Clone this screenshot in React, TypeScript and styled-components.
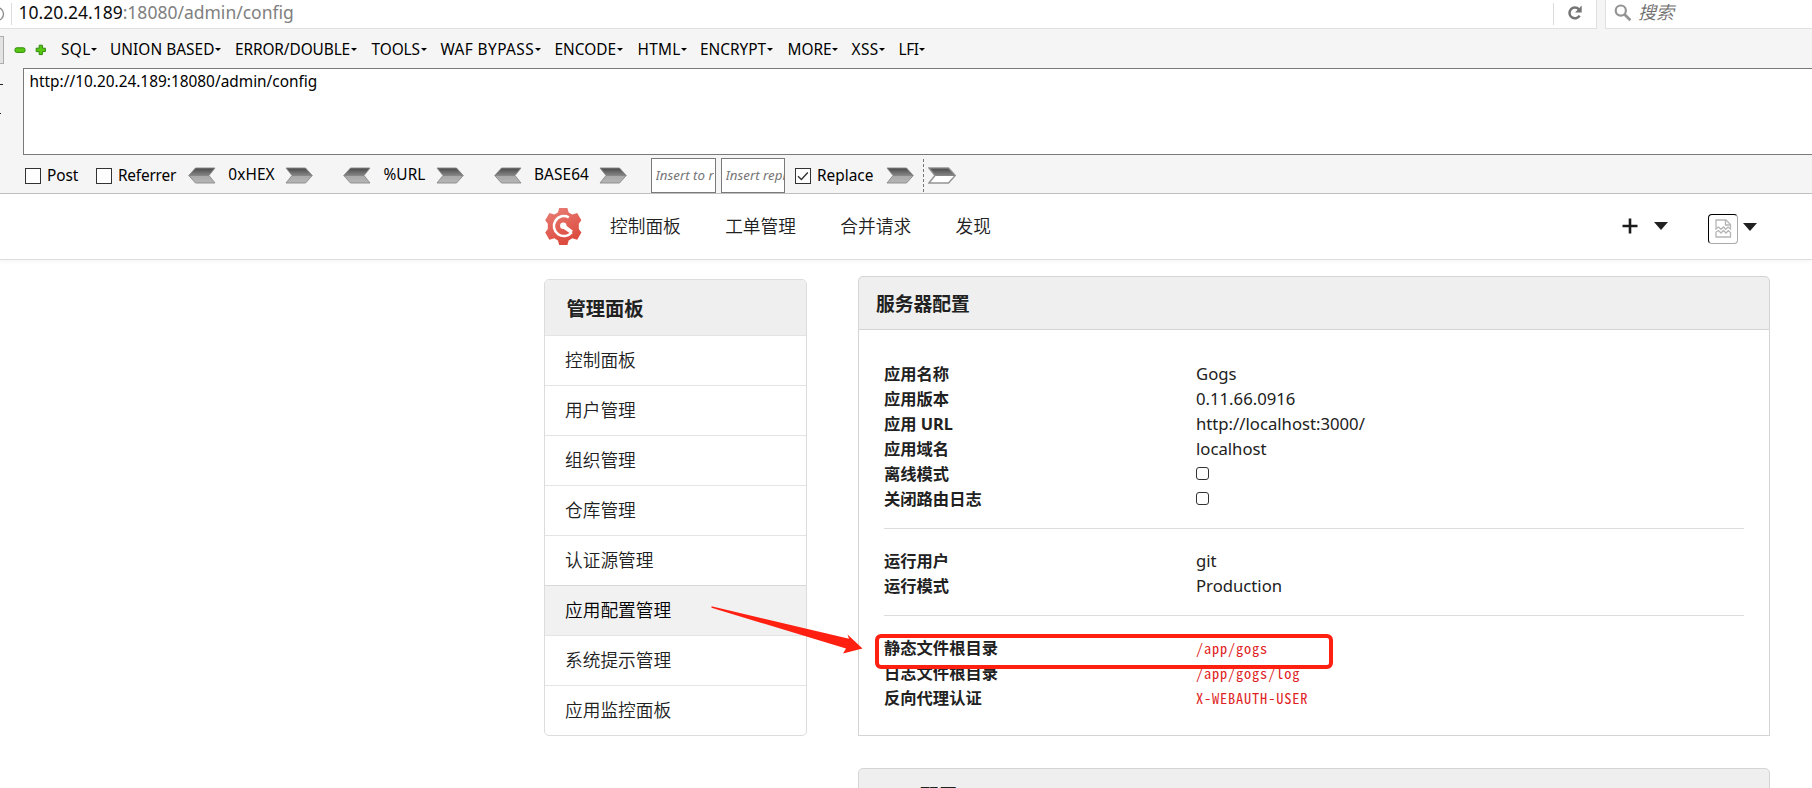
import React from 'react';
import styled, { createGlobalStyle, css } from 'styled-components';

const GlobalStyle = createGlobalStyle`
  * { box-sizing: border-box; }
  body {
    margin: 0;
    background: #fff;
    overflow: hidden;
    font-family: "Noto Sans", "Noto Sans CJK SC", sans-serif;
    color: #212121;
  }
`;

const Page = styled.div`
  position: relative;
  width: 1812px;
  height: 788px;
  overflow: hidden;
`;

/* ---------- browser chrome ---------- */

const AddressRow = styled.div`
  display: flex;
  gap: 8px;
  height: 29px;
  background: #f5f5f5;
`;

const AddressBox = styled.div`
  display: flex;
  align-items: center;
  width: 1597px;
  padding-bottom: 3px;
  background: #fff;
  border-right: 1px solid #e0e0e0;
  border-bottom: 1px solid #e0e0e0;
`;

const SearchBox = styled(AddressBox)`
  flex: 1;
  width: auto;
  padding-left: 8px;
  border-right: 0;
  border-left: 1px solid #e0e0e0;
`;

const Separator = styled.div`
  width: 1px;
  height: 22px;
  margin-top: 3px;
  background: #dcdcdc;
`;

const AddressText = styled.div`
  flex: 1;
  margin-left: 6.5px;
  padding-bottom: 2px;
  font-size: 17.5px;
  line-height: 24px;
  color: #808080;
  white-space: nowrap;
`;

const Host = styled.span`
  color: #0c0c0d;
`;

const ReloadSlot = styled.div`
  display: flex;
  width: 42px;
  padding-left: 13px;
`;

const SearchHint = styled.span`
  margin-left: 6px;
  padding-bottom: 1px;
  font-size: 18px;
  line-height: 24px;
  font-style: italic;
  font-weight: 350;
  color: #6e6e6e;
`;

const HackBar = styled.div`
  height: 165px;
  background: #f5f5f5;
  border-bottom: 1px solid #c0c0c0;
  color: #000;
  font-size: 15.4px;
`;

const MenuRow = styled.div`
  display: flex;
  align-items: center;
  height: 39px;
  padding-top: 2px;
`;

const EdgeButton = styled.div`
  width: 4px;
  height: 28px;
  background: #e3e3e3;
  border: 1px solid #adadad;
  border-left: 0;
`;

const RoundIcons = styled.div`
  display: flex;
  align-items: center;
  gap: 9px;
  width: 57px;
  padding-left: 10px;
`;

const MenuItem = styled.div<{ $w: number; $ls: number }>`
  display: flex;
  align-items: center;
  gap: 0.5px;
  flex: none;
  width: ${p => p.$w}px;
  letter-spacing: ${p => p.$ls}px;
  line-height: 22px;
  white-space: nowrap;
`;

const Caret = styled.i<{ $size: 'small' | 'large' }>`
  flex: none;
  border-style: solid;
  border-color: currentColor transparent transparent;
  ${p =>
    p.$size === 'small'
      ? css`border-width: 3.5px 3px 0;`
      : css`border-width: 8px 7.5px 0;`}
`;

const UrlRow = styled.div`
  display: flex;
  height: 87px;
`;

const Gutter = styled.div`
  display: flex;
  flex-direction: column;
  gap: 28px;
  width: 23px;
  padding-top: 16px;
`;

const Tick = styled.div<{ $w: number }>`
  width: ${p => p.$w}px;
  height: 1px;
  background: #222;
`;

const UrlArea = styled.div`
  flex: 1;
  padding: 2px 5.5px;
  background: #fff;
  border: 1px solid #7a7a7a;
  border-right: 0;
  line-height: 22px;
`;

const OptionRow = styled.div`
  display: flex;
  align-items: center;
  height: 39px;
  padding: 2px 0 0 25px;
`;

const Box = styled.span`
  display: flex;
  align-items: center;
  justify-content: center;
  flex: none;
  width: 16px;
  height: 16px;
  background: #fff;
  border: 1px solid #333;
`;

const BoxLabel = styled.span<{ $w: number; $ls?: number }>`
  flex: none;
  width: ${p => p.$w}px;
  padding-left: 6px;
  line-height: 22px;
  letter-spacing: ${p => p.$ls ?? 0}px;
`;

const Codec = styled.span<{ $w: number }>`
  flex: none;
  width: ${p => p.$w}px;
  padding: 0 0 1px 2px;
  line-height: 22px;
  letter-spacing: 0.09px;
  text-align: center;
`;

const Gap = styled.span<{ $w: number }>`
  flex: none;
  width: ${p => p.$w}px;
`;

const MiniInput = styled.div<{ $w: number }>`
  flex: none;
  width: ${p => p.$w}px;
  height: 35px;
  padding-left: 3.5px;
  overflow: hidden;
  background: #fff;
  border: 1px solid #7a7a7a;
  font-size: 13.3px;
  font-style: italic;
  line-height: 32px;
  color: #757575;
  white-space: nowrap;
`;

const Placeholder = styled.div`
  width: 58px;
  overflow: hidden;
`;

const DashedLine = styled.span`
  height: 33px;
  margin: 0 4px 0 8.5px;
  border-left: 1px dashed #777;
`;

/* ---------- site header ---------- */

const SiteNav = styled.nav`
  display: flex;
  align-items: center;
  height: 66px;
  padding: 0 55px 0 544.5px;
  background: #fff;
  border-bottom: 1px solid #dcdcdc;
  box-shadow: 0 2px 4px rgba(0, 0, 0, 0.04);
`;

const NavLinks = styled.div`
  display: flex;
  flex: 1;
  gap: 44.4px;
  margin-left: 28.5px;
  padding-bottom: 2px;
  font-size: 17.7px;
  font-weight: 350;
  line-height: 26px;
`;

const CreateMenu = styled.div`
  display: flex;
  align-items: center;
  gap: 16px;
  margin: 0 40px 2px 0;
`;

const UserMenu = styled.div`
  display: flex;
  align-items: center;
  gap: 5px;
`;

const Avatar = styled.div`
  display: flex;
  align-items: center;
  justify-content: center;
  width: 30px;
  height: 30px;
  margin-top: 4px;
  border: 1px solid;
  border-color: #000 #aaa #aaa #000;
  border-radius: 4px;
`;

/* ---------- admin content ---------- */

const Content = styled.main`
  display: flex;
  align-items: flex-start;
  gap: 51px;
  padding: 16px 0 0 544px;
`;

const SideMenu = styled.aside`
  width: 263px;
  margin-top: 3px;
  border: 1px solid #dcdcdc;
  border-radius: 5px;
  overflow: hidden;
`;

const SideTitle = styled.h4`
  height: 55px;
  margin: 0;
  padding-left: 21.5px;
  background: #efefef;
  font-size: 19.3px;
  font-weight: 700;
  line-height: 57px;
`;

const SideItem = styled.a<{ $active?: boolean }>`
  display: block;
  height: 50px;
  padding-left: 20px;
  border-top: 1px solid #e4e4e4;
  font-size: 17.7px;
  font-weight: 350;
  line-height: 48px;
  ${p =>
    p.$active &&
    css`
      background: #f1f1f1;
      border-top-color: #d8d8d8;
      color: #000;
    `}
`;

const MainColumn = styled.div`
  display: flex;
  flex-direction: column;
  gap: 32px;
  width: 912px;
`;

const PanelTitle = styled.h4`
  height: 54px;
  margin: 0;
  padding-left: 17px;
  background: #efefef;
  border: 1px solid #d4d4d5;
  border-radius: 5px 5px 0 0;
  font-size: 18.8px;
  font-weight: 700;
  line-height: 55px;
  word-spacing: 4px;
`;

const PanelBody = styled.div`
  height: 406px;
  padding: 32px 25px 0;
  border: 1px solid #d4d4d5;
  border-top: 0;
`;

const Pairs = styled.dl`
  display: grid;
  grid-template-columns: 312px 1fr;
  grid-auto-rows: 25px;
  margin: 0;
  line-height: 25px;
`;

const Term = styled.dt`
  font-size: 16.3px;
  font-weight: 700;
`;

const Value = styled.dd`
  margin: 0;
  font-size: 16.7px;
  line-height: 23px;
`;

const Code = styled.code`
  font-family: "Noto Sans Mono CJK SC", "Liberation Mono", monospace;
  font-size: 14.4px;
  letter-spacing: 0.82px;
  color: #e01f26;
`;

const EmptySquare = styled.span`
  display: block;
  width: 13px;
  height: 13px;
  margin-top: 5px;
  border: 1.5px solid #333;
  border-radius: 3px;
`;

const Rule = styled.hr<{ $before: number; $after: number }>`
  height: 1px;
  margin: ${p => p.$before}px 0 ${p => p.$after}px;
  background: #dcdcdc;
  border: 0;
`;

/* ---------- annotations over the page ---------- */

const HighlightBox = styled.div`
  position: absolute;
  left: 875px;
  top: 634px;
  width: 458px;
  height: 35px;
  border: 4px solid #ff2012;
  border-radius: 6px;
`;

const PointerArrow = styled.svg`
  position: absolute;
  left: 711px;
  top: 605px;
`;

/* ---------- icons ---------- */

const MinusIcon = () => (
  <svg width="12" height="12" viewBox="0 0 12 12">
    <rect x="1" y="3.8" width="10" height="4.6" rx="1.6" fill="#57c713" stroke="#2f8a0a" />
  </svg>
);

const PlusIcon = () => (
  <svg width="12" height="12" viewBox="0 0 12 12">
    <path
      d="M4.2 1.2h3.2v3h3v3.4h-3v3H4.2v-3h-3V4.2h3z"
      fill="#57c713"
      stroke="#2f8a0a"
      strokeLinejoin="round"
    />
  </svg>
);

const ReloadIcon = () => (
  <svg width="16" height="16" viewBox="0 0 16 16">
    <path d="M11.9 4.3A5.4 5.4 0 1 0 12.6 10.6" fill="none" stroke="#757575" strokeWidth="2.5" />
    <path d="M14.7 0.6V7.4H8z" fill="#757575" />
  </svg>
);

const SearchIcon = () => (
  <svg width="18" height="18" viewBox="0 0 18 18">
    <circle cx="6.8" cy="6.6" r="5.1" fill="none" stroke="#949494" strokeWidth="2.2" />
    <path d="M10.6 10.4L16.4 16.2" stroke="#949494" strokeWidth="2.8" />
  </svg>
);

const InfoEdge = () => (
  <svg width="11" height="24" viewBox="0 0 11 24">
    <circle cx="-3" cy="13" r="6.5" fill="none" stroke="#888" strokeWidth="1.3" />
  </svg>
);

const ChevronArrow = ({ left, hollow }: { left?: boolean; hollow?: boolean }) => {
  const id = `arrow-${hollow ? 'hollow' : 'solid'}`;
  return (
    <svg width="28" height="17" viewBox="0 0 28 17" style={{ flex: 'none' }}>
      <defs>
        <linearGradient id={id} x1="0" y1="0" x2="0" y2="1">
          <stop offset="0" stopColor="#484848" />
          <stop offset="0.5" stopColor="#868686" />
          <stop offset="0.55" stopColor={hollow ? '#ffffff' : '#a9a9a9'} />
          <stop offset="1" stopColor={hollow ? '#ffffff' : '#b6b6b6'} />
        </linearGradient>
      </defs>
      <path
        d="M1 1H20.5L27.3 8.5L20.5 16H1L7 8.5Z"
        transform={left ? 'matrix(-1 0 0 1 28 0)' : undefined}
        fill={`url(#${id})`}
        stroke="#8a8a8a"
        strokeWidth={hollow ? 1.5 : 1}
        strokeOpacity="0.9"
      />
    </svg>
  );
};

const Check = () => (
  <svg width="14" height="14" viewBox="0 0 14 14">
    <path d="M2 7.2L5.4 10.4L11.8 3.6" fill="none" stroke="#333" strokeWidth="1.4" />
  </svg>
);

const GogsLogo = () => (
  <svg width="37" height="38" viewBox="0 0 37 38" style={{ flex: 'none' }}>
    <defs>
      <linearGradient id="gear" x1="0" y1="0" x2="0.4" y2="1">
        <stop offset="0" stopColor="#ea8079" />
        <stop offset="1" stopColor="#dc4b3e" />
      </linearGradient>
    </defs>
    <path
      d="M14.2 0h8.2l1.3 4.4 3.6 2.1 4.9-1.4 4.200 7.200-2.600 3.400v5.400l2.600 3.400-4.200 7.200-4.900-1.400-3.600 2.100-1.300 4.600h-8.200l-1.300-4.600-3.600-2.100-4.900 1.400L.2 24.500l2.600-3.400v-5.400L.2 12.300 4.400 5.100l4.900 1.400 3.600-2.100z"
      fill="url(#gear)"
      strokeLinejoin="round"
    />
    <path
      d="M23.800 9.300A10 10 0 1 0 26.800 24.200"
      fill="none"
      stroke="#fff"
      strokeWidth="2.600"
    />
    <path d="M18.800 15.800L28 22.800L25.400 25.600L16.800 19.800Z" fill="#fff" />
    <circle cx="18.300" cy="17.800" r="3.200" fill="#fff" />
  </svg>
);

const BrokenImage = () => (
  <svg width="17" height="19" viewBox="0 0 17 19" fill="none" stroke="#b5b5b5" strokeWidth="1.3">
    <path d="M1 10V1h10l4.500 4.500V10l-2.500-2-2.300 2.300L8.500 8 6 10.300 3.500 8z" />
    <path d="M10.500 1v5h5" />
    <path d="M1 18v-5l2.500-1.500L6 14l2.500-2.500L11 14l2.300-2.300 2.200 1.800V18z" />
  </svg>
);

/* ---------- data ---------- */

const menus: [string, number, number][] = [
  ['SQL', 49, 0.33],
  ['UNION BASED', 125, 0.05],
  ['ERROR/DOUBLE', 136.5, -0.09],
  ['TOOLS', 69, -0.06],
  ['WAF BYPASS', 114, 0.4],
  ['ENCODE', 83, 0],
  ['HTML', 62.5, 0.25],
  ['ENCRYPT', 87.5, 0],
  ['MORE', 64, 0],
  ['XSS', 47, 0.37],
  ['LFI', 30, -0.4],
];

const sideItems = [
  '控制面板',
  '用户管理',
  '组织管理',
  '仓库管理',
  '认证源管理',
  '应用配置管理',
  '系统提示管理',
  '应用监控面板',
];

const Entry = ({ term, children }: { term: string; children: React.ReactNode }) => (
  <>
    <Term>{term}</Term>
    <Value>{children}</Value>
  </>
);

export default function App() {
  return (
    <Page>
      <GlobalStyle />
      <AddressRow>
        <AddressBox>
          <InfoEdge />
          <Separator />
          <AddressText>
            <Host>10.20.24.189</Host>:18080/admin/config
          </AddressText>
          <Separator />
          <ReloadSlot>
            <ReloadIcon />
          </ReloadSlot>
        </AddressBox>
        <SearchBox>
          <SearchIcon />
          <SearchHint>搜索</SearchHint>
        </SearchBox>
      </AddressRow>

      <HackBar>
        <MenuRow>
          <EdgeButton />
          <RoundIcons>
            <MinusIcon />
            <PlusIcon />
          </RoundIcons>
          {menus.map(([label, w, ls]) => (
            <MenuItem key={label} $w={w} $ls={ls}>
              {label}
              <Caret $size="small" />
            </MenuItem>
          ))}
        </MenuRow>
        <UrlRow>
          <Gutter>
            <Tick $w={3} />
            <Tick $w={1} />
          </Gutter>
          <UrlArea>http://10.20.24.189:18080/admin/config</UrlArea>
        </UrlRow>
        <OptionRow>
          <Box />
          <BoxLabel $w={55} $ls={-0.1}>Post</BoxLabel>
          <Box />
          <BoxLabel $w={76} $ls={-0.2}>Referrer</BoxLabel>
          <ChevronArrow left />
          <Codec $w={69}>0xHEX</Codec>
          <ChevronArrow />
          <Gap $w={30} />
          <ChevronArrow left />
          <Codec $w={65}>%URL</Codec>
          <ChevronArrow />
          <Gap $w={30} />
          <ChevronArrow left />
          <Codec $w={77}>BASE64</Codec>
          <ChevronArrow />
          <Gap $w={24} />
          <MiniInput $w={65}>
            <Placeholder>Insert to replace</Placeholder>
          </MiniInput>
          <Gap $w={5} />
          <MiniInput $w={64}>
            <Placeholder>Insert replacing</Placeholder>
          </MiniInput>
          <Gap $w={10} />
          <Box>
            <Check />
          </Box>
          <BoxLabel $w={75}>Replace</BoxLabel>
          <ChevronArrow />
          <DashedLine />
          <ChevronArrow hollow />
        </OptionRow>
      </HackBar>

      <SiteNav>
        <GogsLogo />
        <NavLinks>
          <span>控制面板</span>
          <span>工单管理</span>
          <span>合并请求</span>
          <span>发现</span>
        </NavLinks>
        <CreateMenu>
          <svg width="16" height="16" viewBox="0 0 16 16">
            <path d="M8 0.500V15.500M0.500 8H15.500" stroke="#1c1c1c" strokeWidth="2.600" />
          </svg>
          <Caret $size="large" />
        </CreateMenu>
        <UserMenu>
          <Avatar>
            <BrokenImage />
          </Avatar>
          <Caret $size="large" />
        </UserMenu>
      </SiteNav>

      <Content>
        <SideMenu>
          <SideTitle>管理面板</SideTitle>
          {sideItems.map(label => (
            <SideItem key={label} $active={label === '应用配置管理'}>
              {label}
            </SideItem>
          ))}
        </SideMenu>
        <MainColumn>
          <section>
            <PanelTitle>服务器配置</PanelTitle>
            <PanelBody>
              <Pairs>
                <Entry term="应用名称">Gogs</Entry>
                <Entry term="应用版本">0.11.66.0916</Entry>
                <Entry term="应用 URL">http://localhost:3000/</Entry>
                <Entry term="应用域名">localhost</Entry>
                <Entry term="离线模式"><EmptySquare /></Entry>
                <Entry term="关闭路由日志"><EmptySquare /></Entry>
              </Pairs>
              <Rule $before={16} $after={20} />
              <Pairs>
                <Entry term="运行用户">git</Entry>
                <Entry term="运行模式">Production</Entry>
              </Pairs>
              <Rule $before={16} $after={20} />
              <Pairs>
                <Entry term="静态文件根目录"><Code>/app/gogs</Code></Entry>
                <Entry term="日志文件根目录"><Code>/app/gogs/log</Code></Entry>
                <Entry term="反向代理认证"><Code>X-WEBAUTH-USER</Code></Entry>
              </Pairs>
            </PanelBody>
          </section>
          <section>
            <PanelTitle>SSH 配置</PanelTitle>
          </section>
        </MainColumn>
      </Content>

      <HighlightBox />
      <PointerArrow width="153" height="52" viewBox="711 605 153 52">
        <path
          d="M711.500 606.300L849 638.800L847.500 634.500L862.500 648.500L843 653.500L846 648.500L711.500 607.800Z"
          fill="#ff2012"
        />
      </PointerArrow>
    </Page>
  );
}
